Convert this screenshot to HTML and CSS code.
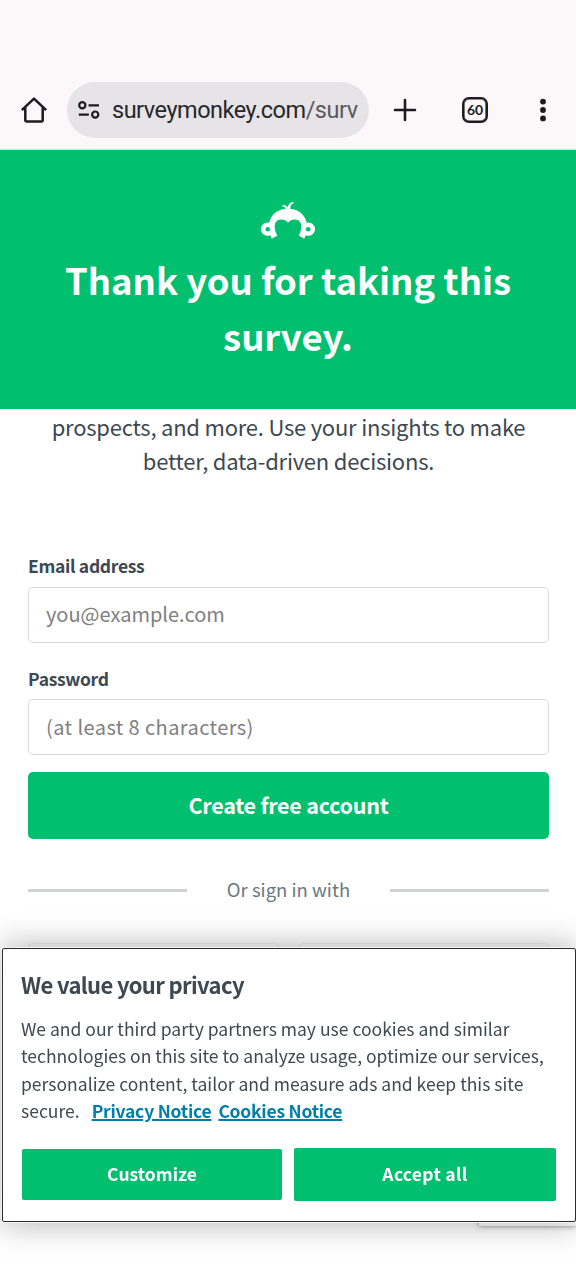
FILE: index.html
```
<!DOCTYPE html>
<html lang="en">
<head>
    <meta charset="utf-8">
    <title>Thank you for taking this survey</title>
    <link rel="stylesheet" href="styles.css">
</head>
<body>
<div class="toolbar">
    <svg class="home" width="28" height="28" viewBox="0 0 28 28" fill="none" stroke="#1c1b1f" stroke-width="2.5">
        <path d="M1.8 14.2 14 2.6 26.2 14.2M5.3 11.5V24q0 1.5 1.5 1.5h14.4q1.5 0 1.500-1.500V11.500" stroke-linejoin="round"/>
    </svg>
    <div class="address">
        <svg width="22" height="18" viewBox="0 0 22 18" fill="none" stroke="#1c1b1f" stroke-width="2.2">
            <circle cx="4.3" cy="4.3" r="3.1"/>
            <path d="M10.5 4.3H21M.8 13.6h10"/>
            <circle cx="17.2" cy="13.6" r="3.1"/>
        </svg>
        <span class="url">surveymonkey.com<span class="path">/surv</span></span>
    </div>
    <svg class="plus" width="24" height="24" viewBox="0 0 24 24" stroke="#1c1b1f" stroke-width="2.6" stroke-linecap="round">
        <path d="M12 2v20M2 12h20"/>
    </svg>
    <div class="tabs">60</div>
    <svg class="more" width="8" height="24" viewBox="0 0 8 24" fill="#1c1b1f">
        <circle cx="4" cy="3.6" r="2.9"/>
        <circle cx="4" cy="12" r="2.9"/>
        <circle cx="4" cy="20.4" r="2.9"/>
    </svg>
</div>

<div class="banner">
    <svg class="logo" width="54" height="38" viewBox="0 0 54 38">
        <path fill="#fff" d="M8.2 20.8C10 12.500 17 7.300 24.800 6.800 24.500 5.300 23.300 4.300 21.300 4.500L21.200 3.500C23.500 2.800 25.600 3.500 26.800 5.200 27.300 2.300 29.300.3 32.300.1L32.700 1.100C30.300 2 29.200 4.300 29.200 6.800 37 7.300 44 12.500 45.700 20.800A6.600 6.600 0 1 1 44.800 33.200L43.200 36.800 37.600 33.400C41.500 28 42 17.500 33.800 17.500 30.500 17.500 28.200 19 27 20.800 25.800 19 23.500 17.500 20.200 17.500 12 17.500 12.500 28 16.400 33.400L10.800 36.800 9.200 33.200A6.600 6.600 0 1 1 8.200 20.800Z"/>
        <circle cx="6.800" cy="27.200" r="2.300" fill="#00bf6f"/>
        <circle cx="47.200" cy="27.200" r="2.300" fill="#00bf6f"/>
    </svg>
    <h1>Thank you for taking this<br>survey.</h1>
</div>

<div class="content">
    <p class="intro">prospects, and more. Use your insights to make<br>better, data-driven decisions.</p>
    <form class="signup">
        <label for="email">Email address</label>
        <input class="field" id="email" type="text" placeholder="you@example.com">
        <label class="label-password" for="password">Password</label>
        <input class="field field-password" id="password" type="password" placeholder="(at least 8 characters)">
        <button class="create" type="button">Create free account</button>
    </form>
    <div class="divider"><span>Or sign in with</span></div>
    <div class="social">
        <div class="social-btn"></div>
        <div class="social-btn"></div>
    </div>
</div>

<div class="badge"></div>

<div class="cookies">
    <h2>We value your privacy</h2>
    <p>
        We and our third party partners may use cookies and similar<br>
        technologies on this site to analyze usage, optimize our services,<br>
        personalize content, tailor and measure ads and keep this site<br>
        secure.<a class="privacy" href="#">Privacy Notice</a><a class="notice" href="#">Cookies Notice</a>
    </p>
    <div class="actions">
        <button class="customize" type="button">Customize</button>
        <button class="accept" type="button">Accept all</button>
    </div>
</div>
</body>
</html>
```
FILE: styles.css
```
* {
    box-sizing: border-box;
}
body {
    margin: 0;
    height: 1280px;
    overflow: hidden;
    background: #fff;
    color: #3d4851;
    font-family: "Noto Sans CJK SC", "Noto Sans", sans-serif;
}
svg {
    display: block;
    flex: none;
}
.toolbar {
    display: flex;
    align-items: center;
    height: 150px;
    padding: 70px 29px 0 20px;
    background: #fcf8f9;
    border-bottom: 1px solid #dedadc;
}
.address {
    display: flex;
    align-items: center;
    width: 302px;
    height: 56px;
    margin-left: 19px;
    padding-left: 11px;
    border-radius: 28px;
    background: #e6e4e7;
}
.url {
    margin-left: 12px;
    font: 23.5px/56px Roboto, sans-serif;
    letter-spacing: -0.48px;
    color: #28272b;
    white-space: nowrap;
}
.path {
    color: #5b595e;
}
.plus {
    margin-left: 24px;
}
.tabs {
    width: 26px;
    height: 26px;
    margin-left: 45px;
    border: 2px solid #1c1b1f;
    border-radius: 7px;
    box-shadow: inset 0 0 0 0.6px #1c1b1f;
    color: #1c1b1f;
    font: 700 14px/21px Lato, sans-serif;
    text-align: center;
}
.more {
    margin-left: 51px;
}
.banner {
    height: 259px;
    padding-top: 52px;
    background: #00bf6f;
    color: #fff;
    text-align: center;
}
.logo {
    margin: 0 auto;
}
.banner h1 {
    margin: 12px 0 0;
    font-size: 36.5px;
    font-weight: 700;
    line-height: 56px;
    letter-spacing: -0.05px;
}
.content {
    padding: 1px 27px 0 28px;
}
.intro {
    margin: 0;
    font-size: 22px;
    line-height: 33.5px;
    letter-spacing: -0.22px;
    text-align: center;
}
.signup {
    display: flex;
    flex-direction: column;
    padding-top: 76px;
}
.signup label {
    height: 26px;
    margin-bottom: 8px;
    font-size: 17.5px;
    font-weight: 700;
    line-height: 26px;
    letter-spacing: -0.32px;
}
.signup .label-password {
    margin-top: 23px;
    margin-bottom: 7px;
}
.field {
    width: 100%;
    height: 56px;
    padding: 0 17px 3px;
    border: 1px solid #d8d9da;
    border-radius: 5px;
    font: 20px "Noto Sans CJK SC", "Noto Sans", sans-serif;
}
.field-password {
    padding-bottom: 1px;
    letter-spacing: 0.42px;
}
.field::placeholder {
    color: #808080;
    opacity: 1;
}
.create {
    height: 67px;
    margin-top: 17px;
    padding: 0 0 2px;
    border: 0;
    border-radius: 5px;
    background: #00bf6f;
    color: #fff;
    font: 700 21.5px "Noto Sans CJK SC", "Noto Sans", sans-serif;
    letter-spacing: -0.25px;
}
.divider {
    display: flex;
    align-items: center;
    height: 30px;
    margin-top: 36px;
    color: #6b787f;
    font-size: 18.5px;
    white-space: nowrap;
}
.divider::before,
.divider::after {
    content: "";
    flex: none;
    width: 159px;
    height: 3px;
    background: #d0d2d3;
}
.divider span {
    flex: 1;
    padding-bottom: 3px;
    text-align: center;
}
.social {
    display: flex;
    gap: 20px;
    margin-top: 39px;
}
.social-btn {
    flex: 1;
    height: 56px;
    border-radius: 5px;
    box-shadow: 0 0 2px rgba(0, 0, 0, 0.2);
}
.badge {
    position: fixed;
    right: 0;
    bottom: 54px;
    width: 97px;
    height: 80px;
    background: #fff;
    box-shadow: 0 0 5px #808080;
}
.cookies {
    position: fixed;
    top: 948px;
    left: 2px;
    width: 574px;
    height: 274px;
    padding: 18px 18px 0 18px;
    border: 1px solid #2c2c2c;
    border-radius: 2px;
    background: #fff;
    box-shadow: 0 0 0 1px #f4f4f4, 0 0 34px rgba(0, 0, 0, 0.34);
}
.cookies h2 {
    margin: 0;
    font-size: 22px;
    font-weight: 700;
    line-height: 34px;
    letter-spacing: -0.65px;
}
.cookies p {
    margin: 14px 0 0;
    font-size: 17.5px;
    line-height: 27.3px;
    letter-spacing: 0.01px;
    white-space: nowrap;
}
.cookies a {
    color: #007faa;
    font-weight: 700;
    letter-spacing: -0.24px;
    text-decoration-thickness: 2px;
}
.privacy {
    margin-left: 12px;
}
.notice {
    margin-left: 7px;
}
.actions {
    display: flex;
    align-items: center;
    gap: 12px;
    margin-top: 24px;
    padding-left: 1px;
}
.actions button {
    padding: 0 0 2px;
    border: 0;
    border-radius: 2px;
    background: #00bf6f;
    color: #fff;
    font: 700 17.5px "Noto Sans CJK SC", "Noto Sans", sans-serif;
}
.actions .customize {
    width: 260px;
    height: 51px;
}
.actions .accept {
    width: 262px;
    height: 53px;
    letter-spacing: 0.3px;
}
```
